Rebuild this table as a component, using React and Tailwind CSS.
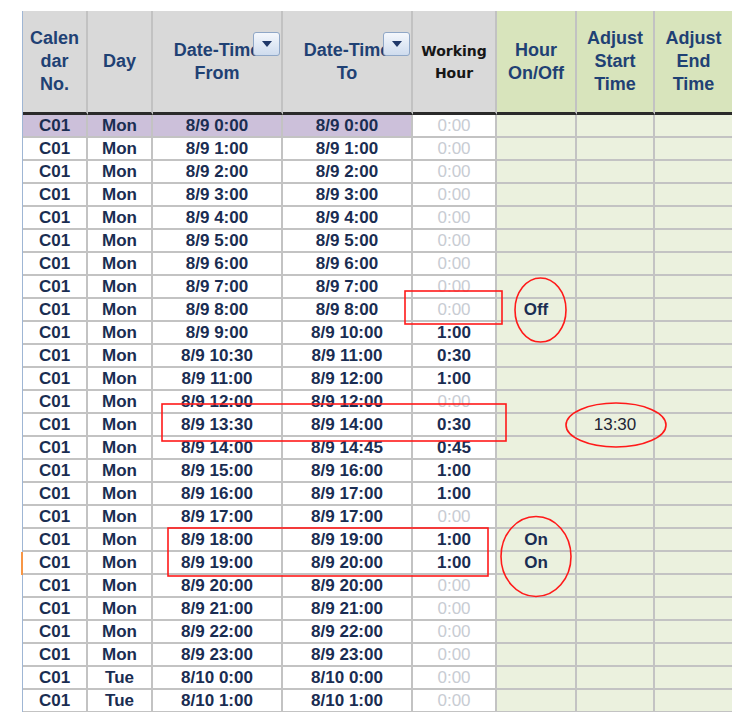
import React from "react";

const COLS = "grid grid-cols-[65px_65px_130px_130px_84px_80px_78px_77px]";

const rows = [
  ["Mon", "8/9 0:00", "8/9 0:00", "0:00", "", ""],
  ["Mon", "8/9 1:00", "8/9 1:00", "0:00", "", ""],
  ["Mon", "8/9 2:00", "8/9 2:00", "0:00", "", ""],
  ["Mon", "8/9 3:00", "8/9 3:00", "0:00", "", ""],
  ["Mon", "8/9 4:00", "8/9 4:00", "0:00", "", ""],
  ["Mon", "8/9 5:00", "8/9 5:00", "0:00", "", ""],
  ["Mon", "8/9 6:00", "8/9 6:00", "0:00", "", ""],
  ["Mon", "8/9 7:00", "8/9 7:00", "0:00", "", ""],
  ["Mon", "8/9 8:00", "8/9 8:00", "0:00", "Off", ""],
  ["Mon", "8/9 9:00", "8/9 10:00", "1:00", "", ""],
  ["Mon", "8/9 10:30", "8/9 11:00", "0:30", "", ""],
  ["Mon", "8/9 11:00", "8/9 12:00", "1:00", "", ""],
  ["Mon", "8/9 12:00", "8/9 12:00", "0:00", "", ""],
  ["Mon", "8/9 13:30", "8/9 14:00", "0:30", "", "13:30"],
  ["Mon", "8/9 14:00", "8/9 14:45", "0:45", "", ""],
  ["Mon", "8/9 15:00", "8/9 16:00", "1:00", "", ""],
  ["Mon", "8/9 16:00", "8/9 17:00", "1:00", "", ""],
  ["Mon", "8/9 17:00", "8/9 17:00", "0:00", "", ""],
  ["Mon", "8/9 18:00", "8/9 19:00", "1:00", "On", ""],
  ["Mon", "8/9 19:00", "8/9 20:00", "1:00", "On", ""],
  ["Mon", "8/9 20:00", "8/9 20:00", "0:00", "", ""],
  ["Mon", "8/9 21:00", "8/9 21:00", "0:00", "", ""],
  ["Mon", "8/9 22:00", "8/9 22:00", "0:00", "", ""],
  ["Mon", "8/9 23:00", "8/9 23:00", "0:00", "", ""],
  ["Tue", "8/10 0:00", "8/10 0:00", "0:00", "", ""],
  ["Tue", "8/10 1:00", "8/10 1:00", "0:00", "", ""],
];

function DropBtn() {
  return (
    <div className="absolute top-[21px] right-[1px] w-[27px] h-[24px] rounded-[3px] border border-solid border-[#8fa7c7] bg-gradient-to-b from-[#f4f7fc] to-[#cfdcee] flex items-center justify-center">
      <svg width="10" height="6" viewBox="0 0 10 6">
        <polygon points="0,0 10,0 5,6" fill="#1f3768" />
      </svg>
    </div>
  );
}

function HeadCell({ children, green, last, extra = "" }) {
  return (
    <div
      className={`relative flex items-center justify-center text-center border-solid border-b-[3px] border-b-[#2a2a2a] ${
        last ? "" : "border-r-2 border-r-[#c2c2c2]"
      } ${green ? "bg-[#d8e4bc]" : "bg-[#d9d9d9]"} ${extra}`}
    >
      {children}
    </div>
  );
}

const cellLine = "border-solid border-b-2 border-b-[#c3c3c3]";
const cellBase = `flex items-center justify-center pt-px leading-[20px] ${cellLine} border-r-2 border-r-[#c3c3c3]`;

export default function App() {
  return (
    <div
      className="relative w-[749px] h-[712px] overflow-hidden bg-white"
      style={{ fontFamily: '"Liberation Sans", Arial, sans-serif' }}
    >
      <div className="pt-[11px] pl-[22px]">
        {/* Header */}
        <div className={`${COLS} h-[104px] border-solid border-l border-l-[#9fb6d4] w-[710px] text-[18px] leading-[23px] font-bold text-[#1f4174]`}>
          <HeadCell>
            <span>Calen<br />dar<br />No.</span>
          </HeadCell>
          <HeadCell>
            <span>Day</span>
          </HeadCell>
          <HeadCell extra="overflow-hidden">
            <span className="whitespace-nowrap">Date-Time<br />From</span>
            <DropBtn />
          </HeadCell>
          <HeadCell extra="overflow-hidden">
            <span className="whitespace-nowrap">Date-Time<br />To</span>
            <DropBtn />
          </HeadCell>
          <HeadCell>
            <span
              className="text-[14px] leading-[22px] text-[#161616] font-bold"
              style={{ fontFamily: '"DejaVu Sans", Verdana, sans-serif' }}
            >
              Working<br />Hour
            </span>
          </HeadCell>
          <HeadCell green>
            <span>Hour<br />On/Off</span>
          </HeadCell>
          <HeadCell green>
            <span>Adjust<br />Start<br />Time</span>
          </HeadCell>
          <HeadCell green last>
            <span>Adjust<br />End<br />Time</span>
          </HeadCell>
        </div>

        {/* Body */}
        {rows.map((r, i) => {
          const first = i === 0;
          const lead = first ? "bg-[#ccc0da]" : "bg-white";
          const grey = r[3] === "0:00";
          return (
            <div
              key={i}
              className={`${COLS} h-[23px] text-[17px] font-bold text-[#1a2d52] border-solid ${
                i === 19 ? "border-l-2 border-l-[#f79646] -ml-px w-[711px]" : "border-l border-l-[#9fb6d4] w-[710px]"
              }`}
            >
              <div className={`${cellBase} ${lead}`}>C01</div>
              <div className={`${cellBase} ${lead}`}>{r[0]}</div>
              <div className={`${cellBase} ${lead}`}>{r[1]}</div>
              <div className={`${cellBase} ${lead}`}>{r[2]}</div>
              <div className={`${cellBase} bg-white ${grey ? "text-[#c8ccd3] font-normal" : ""}`}>{r[3]}</div>
              <div className={`${cellBase} bg-[#ebf1de]`}>{r[4]}</div>
              <div className={`${cellBase} bg-[#ebf1de] font-normal text-[#1e2535]`}>{r[5]}</div>
              <div className={`${cellLine} bg-[#ebf1de]`}></div>
            </div>
          );
        })}
      </div>

      {/* Red annotations */}
      <svg
        className="absolute left-0 top-0 pointer-events-none"
        width="749"
        height="712"
        viewBox="0 0 749 712"
      >
        <g fill="none" stroke="#ff1a1a" strokeWidth="1.6">
          <rect x="405" y="291" width="97" height="33" />
          <rect x="162" y="404" width="344" height="37" />
          <rect x="168" y="528" width="320" height="48" />
          <ellipse cx="540.5" cy="310" rx="25.5" ry="32" />
          <ellipse cx="616" cy="425" rx="50" ry="22" />
          <ellipse cx="536" cy="556.5" rx="35" ry="40" />
        </g>
      </svg>
    </div>
  );
}
